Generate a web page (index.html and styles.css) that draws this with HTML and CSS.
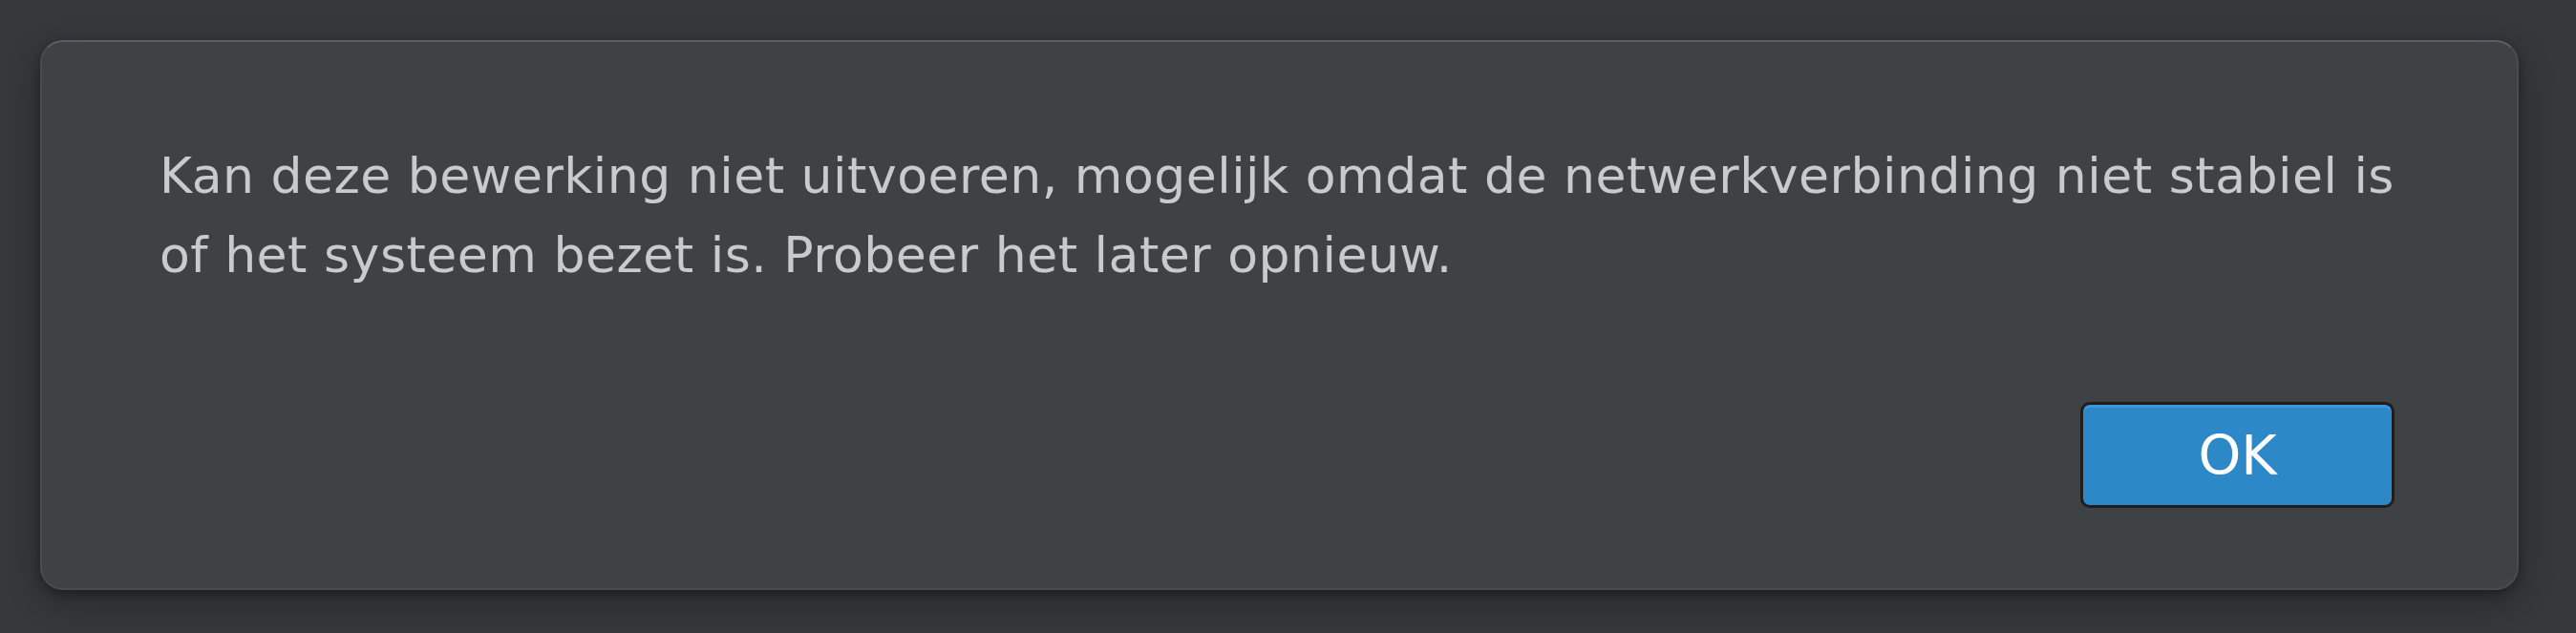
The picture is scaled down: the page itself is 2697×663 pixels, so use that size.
FILE: index.html
```html
<!DOCTYPE html>
<html lang="nl">
<head>
<meta charset="utf-8">
<title>Melding</title>
<link rel="stylesheet" href="styles.css">
</head>
<body>
<div class="dialog">
  <p class="message">Kan deze bewerking niet uitvoeren, mogelijk omdat de netwerkverbinding niet stabiel is of het systeem bezet is. Probeer het later opnieuw.</p>
  <div class="actions">
    <button class="btn-ok" type="button">OK</button>
  </div>
</div>
</body>
</html>
```
FILE: styles.css
```css
html, body {
  margin: 0;
  padding: 0;
}
body {
  background: #36383b;
  width: 2697px;
  height: 663px;
  overflow: hidden;
  padding: 42px 0 0 42px;
  box-sizing: border-box;
  font-family: "DejaVu Sans", Verdana, sans-serif;
}
.dialog {
  width: 2595px;
  height: 576px;
  box-sizing: border-box;
  background: #3f4245;
  border: 2px solid #484b4f;
  border-top-color: #5a5d61;
  border-radius: 24px;
  box-shadow: 0 12px 36px rgba(0, 0, 0, 0.32), 0 3px 8px rgba(0, 0, 0, 0.28);
  padding: 99px 80px 84px 123px;
  display: flex;
  flex-direction: column;
  justify-content: space-between;
}
.message {
  margin: 0;
  color: #c8cacc;
  font-size: 52px;
  line-height: 83px;
  letter-spacing: 0.5px;
}
.actions {
  display: flex;
  justify-content: flex-end;
  padding-right: 48px;
}
.btn-ok {
  width: 329px;
  height: 111px;
  box-sizing: border-box;
  border: 3px solid #201d1c;
  border-radius: 10px;
  background: #2d88c8;
  box-shadow: inset 0 3px 0 #3c97d6;
  color: #ffffff;
  font-family: "DejaVu Sans", Verdana, sans-serif;
  font-size: 57px;
  padding: 0;
}
```
